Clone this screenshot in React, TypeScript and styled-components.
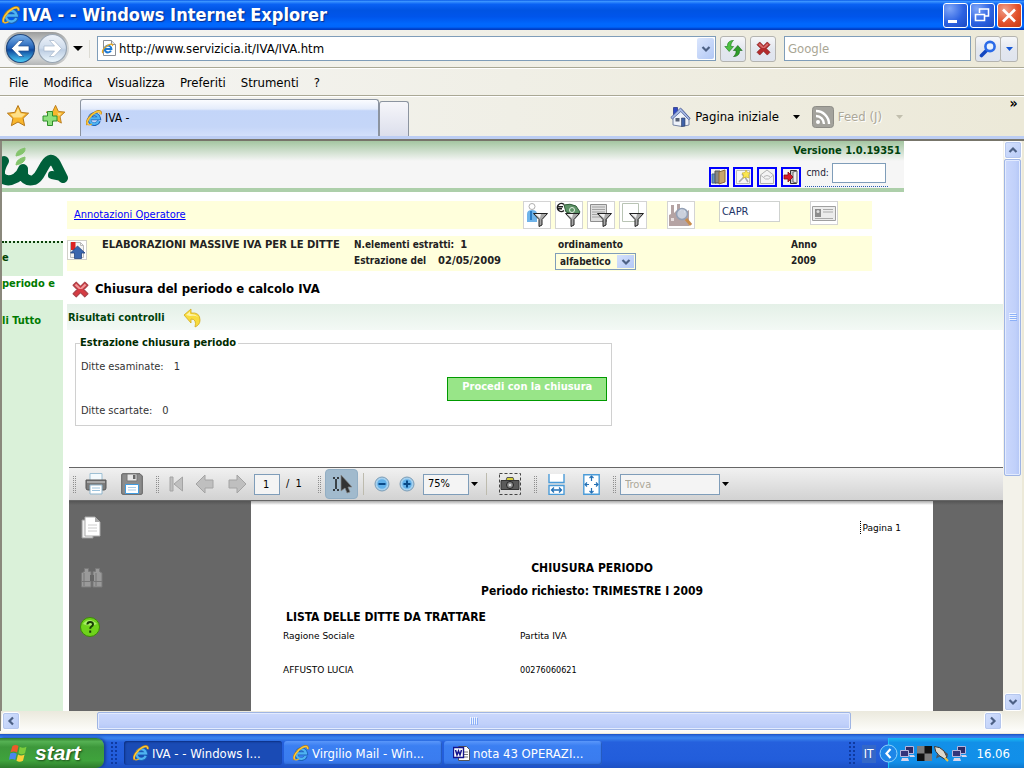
import React from "react";
import styled, { createGlobalStyle, css } from "styled-components";

const ui = `"DejaVu Sans Condensed", Tahoma, "DejaVu Sans", sans-serif`;
const wide = `"DejaVu Sans", Verdana, sans-serif`;
const tahoma = `"DejaVu Sans Condensed", Tahoma, sans-serif`;

const Global = createGlobalStyle`
  * { box-sizing: border-box; }
  body { margin: 0; background: #ece9d8; font-family: ${ui}; font-size: 12px; color: #000; overflow: hidden; }
  button, input, select { font: inherit; color: inherit; margin: 0; border-radius: 0; }
  button { padding: 0; background: none; border: 0; }
  svg { display: block; flex: none; }
`;

const Desktop = styled.div`
  min-height: 100vh;
  display: flex;
  flex-direction: column;
`;

/* ---------- title bar ---------- */
const TitleBar = styled.header`
  height: 30px;
  flex: none;
  display: flex;
  align-items: center;
  gap: 2px;
  padding: 0 2px;
  background: linear-gradient(#0a5be8 0, #3a93ff 5%, #0a62f4 14%, #0054e3 34%, #0055eb 56%, #0068fe 80%, #0066fc 90%, #003dc4 97%);
`;
const WindowTitle = styled.h1`
  flex: 1;
  margin: 0;
  font: bold 18px/30px ${tahoma};
  color: #fff;
  text-shadow: 1px 1px 1px #0a2f8c;
  white-space: nowrap;
`;
const CaptionButton = styled.button<{ $close?: boolean }>`
  width: 25px;
  height: 25px;
  border: 1px solid #fff;
  border-radius: 3px;
  background: ${(p) =>
    p.$close
      ? "radial-gradient(circle at 30% 25%, #f0a08a, #e2512b 55%, #c43a12)"
      : "radial-gradient(circle at 25% 20%, #7fa6f8, #2c62e2 55%, #1c49c2)"};
`;

/* ---------- address bar ---------- */
const bar = css`
  display: flex;
  align-items: center;
  flex: none;
  background: linear-gradient(90deg, #f5f5f4, #f0efe6 50%, #ece9d8);
`;
const AddressBar = styled.div`
  ${bar}
  height: 38px;
  padding: 0 6px 0 4px;
  border-bottom: 1px solid #aaa895;
  gap: 4px;
`;
const NavButton = styled.button`
  display: flex;
`;
const NavPair = styled.div`
  display: flex;
  width: 65px;
  height: 33px;
  align-items: center;
  justify-content: space-between;
  border-radius: 17px;
  padding: 0 1px;
  background: linear-gradient(#9a9c9c, #d6d8d8 40%, #d0d2d2 80%, #b4b6b6);
`;
const Divider = styled.i`
  width: 1px;
  height: 18px;
  background: #dddcd4;
  margin: 0 3px 0 2px;
`;
const UrlBox = styled.label`
  flex: 1;
  height: 25px;
  display: flex;
  align-items: center;
  gap: 2px;
  padding: 0 1px 0 3px;
  background: #fff;
  border: 1px solid #7f9db9;
`;
const BareInput = styled.input`
  flex: 1;
  min-width: 0;
  border: 0;
  padding: 0;
  outline: 0;
  background: transparent;
  font-size: 13px;
  &::placeholder { color: #a9a694; opacity: 1; }
`;
const DropButton = styled.button`
  width: 17px;
  height: 21px;
  display: flex;
  align-items: center;
  justify-content: center;
  border-radius: 2px;
  background: linear-gradient(135deg, #dbe6fd, #b2c8f5);
`;
const SmallButton = styled.button<{ $w?: number }>`
  width: ${(p) => p.$w ?? 26}px;
  height: 26px;
  display: flex;
  align-items: center;
  justify-content: center;
  border: 1px solid #b4b4b0;
  border-radius: 3px;
  background: linear-gradient(#f6f7f9, #e3e7ef 50%, #dfe4ee);
`;
const SearchBox = styled(UrlBox)`
  flex: 0 1 187px;
  margin: 0 0 0 4px;
`;
const SearchButtons = styled.div`
  display: flex;
  ${SmallButton} + ${SmallButton} { margin-left: -1px; }
`;

/* ---------- menu and tabs ---------- */
const MenuBar = styled.nav`
  ${bar}
  height: 28px;
  gap: 15px;
  padding: 0 9px;
  border-top: 1px solid #fff;
  border-bottom: 1px solid #aaa895;
  font-size: 13px;
`;
const TabBar = styled.div`
  ${bar}
  height: 40px;
  align-items: stretch;
  padding: 2px 4px 0 6px;
  border-top: 1px solid #fff;
`;
const Favorites = styled.div`
  display: flex;
  align-items: center;
  gap: 12px;
  width: 74px;
  padding-bottom: 3px;
`;
const Tab = styled.button`
  width: 299px;
  display: flex;
  align-items: center;
  gap: 3px;
  padding: 0 5px;
  border: 1px solid #8c94a0;
  border-bottom: 0;
  border-radius: 3px 3px 0 0;
  background: linear-gradient(#fbfcff, #e4ecfb 25%, #c3d5f8 30%, #c5d6f8 75%, #d3e0fb);
  font-size: 12px;
`;
const NewTab = styled.button`
  width: 30px;
  margin-top: 2px;
  border: 1px solid #8c94a0;
  border-bottom: 0;
  border-radius: 3px 3px 0 0;
  background: linear-gradient(#f6f6fa, #dcdfec);
`;
const Commands = styled.div`
  flex: 1;
  display: flex;
  align-items: center;
  justify-content: flex-end;
  padding-bottom: 2px;
  font-size: 13px;
`;
const Command = styled.button<{ $off?: boolean }>`
  display: flex;
  align-items: center;
  gap: 4px;
  margin-right: 12px;
  color: ${(p) => (p.$off ? "#aca899" : "#000")};
  text-shadow: ${(p) => (p.$off ? "1px 1px 0 #fff" : "none")};
  svg:last-child { margin-left: 10px; }
`;
const More = styled.button`
  align-self: flex-start;
  width: 13px;
  margin-left: 92px;
  font: bold 14px/8px ${tahoma};
`;
const TabFoot = styled.div`
  height: 5px;
  flex: none;
  background: #bccdf3;
  border-bottom: 2px solid #77756a;
`;

/* ---------- viewport ---------- */
const Viewport = styled.div`
  flex: 1;
  display: flex;
  padding-right: 2px;
  border-left: 2px solid #8a887c;
  background: #ece9d8;
  min-height: 0;
`;
const Page = styled.main`
  flex: 1;
  min-width: 0;
  display: flex;
  flex-direction: column;
  background: #fff;
  font: 11px/16px ${tahoma};
`;
const SiteHeader = styled.div`
  width: 90.1%;
  height: 51px;
  flex: none;
  display: flex;
  justify-content: space-between;
  border-bottom: 4px solid #adcfaa;
  background: linear-gradient(#a4c6a1, #f6f6f6 20px);
`;
const HeaderSide = styled.div`
  display: flex;
  flex-direction: column;
  align-items: flex-end;
  padding: 2px 3px 0 0;
  gap: 3px;
`;
const Version = styled.strong`
  color: #00420c;
  font: bold 11px/16px ${tahoma};
`;
const HeaderTools = styled.div`
  display: flex;
  align-items: flex-end;
  gap: 4px;
  padding-right: 13px;
`;
const BlueButton = styled.button`
  width: 20px;
  height: 20px;
  display: flex;
  align-items: center;
  justify-content: center;
  border: 2px solid #00f;
  background: #f4f4f0;
`;
const CmdLabel = styled.label`
  display: flex;
  align-items: center;
  gap: 3px;
  height: 25px;
  padding: 0 2px 2px 1px;
  border-bottom: 1px dotted #2a5bb0;
  font-size: 10px;
  color: #223;
`;
const TextField = styled.input<{ $w: number; $h: number; $line?: string }>`
  width: ${(p) => p.$w}px;
  height: ${(p) => p.$h}px;
  padding: 0 2px;
  border: 1px solid ${(p) => p.$line ?? "#7f9db9"};
  background: #fff;
  outline: 0;
`;
const Columns = styled.div`
  flex: 1;
  display: flex;
  gap: 4px;
`;
const SideNav = styled.nav`
  width: 61px;
  flex: none;
  display: flex;
  flex-direction: column;
  padding-top: 49px;
  overflow: hidden;
  color: #007a00;
  font-weight: bold;
  white-space: nowrap;
`;
const SideItem = styled.a<{ $h?: number; $plain?: boolean; $pad: number; $dots?: boolean; $dark?: boolean }>`
  flex: ${(p) => (p.$h ? `0 0 ${p.$h}px` : "1")};
  padding-top: ${(p) => p.$pad}px;
  background: ${(p) => (p.$plain ? "#fff" : "#daf1d9")};
  border-top: ${(p) => (p.$dots ? "2px dotted #0a400a" : "0")};
  color: ${(p) => (p.$dark ? "#044404" : "inherit")};
  text-decoration: none;
`;
const Content = styled.div`
  flex: 1;
  min-width: 0;
  display: flex;
  flex-direction: column;
  padding-top: 9px;
`;
const YellowRow = styled.div`
  width: 86%;
  flex: none;
  background: #ffffdc;
`;
const ToolRow = styled(YellowRow)`
  height: 28px;
  display: flex;
  align-items: flex-start;
  padding: 0 34px 0 7px;
`;
const NoteLink = styled.a`
  flex: 1;
  line-height: 28px;
  color: #00f;
`;
const IconGroup = styled.div`
  display: flex;
  gap: 4px;
  margin-right: 20px;
`;
const BoxButton = styled.button<{ $h?: number }>`
  width: 28px;
  height: ${(p) => p.$h ?? 28}px;
  display: flex;
  align-items: center;
  justify-content: center;
  border: 1px solid #d4d4d4;
  background: #fff;
`;
const CodeWrap = styled.label`
  display: flex;
  margin: 0 30px 0 24px;
  color: #223366;
`;
const InfoRow = styled(YellowRow)`
  height: 35px;
  margin-top: 7px;
  padding-top: 1px;
  display: grid;
  grid-template-columns: 35px 252px 201px 1fr 81px;
  font: bold 10px/16px ${tahoma};
  color: #222;
`;
const Heading = styled.span`
  font-family: ${wide};
`;
const HomeButton = styled.button`
  width: 20px;
  height: 20px;
  margin-top: 3px;
  border: 1px solid #d0d0c8;
  background: #fff;
`;
const Pair = styled.span<{ $gap: number }>`
  display: flex;
  gap: ${(p) => p.$gap}px;
  span:last-child { font-family: ${wide}; }
`;
const SortLabel = styled.label`
  padding-left: 3px;
  display: block;
`;
const SelectWrap = styled.span<{ $w: number; $h: number }>`
  position: relative;
  display: block;
  width: ${(p) => p.$w}px;
  height: ${(p) => p.$h}px;
  svg, i { pointer-events: none; }
`;
const Select = styled.select<{ $bg?: string }>`
  appearance: none;
  width: 100%;
  height: 100%;
  padding: 0 4px;
  border: 1px solid #7f9db9;
  background: ${(p) => p.$bg ?? "#fff"};
`;
const SelectArrow = styled.i`
  position: absolute;
  right: 2px;
  top: 2px;
  bottom: 2px;
  width: 17px;
  display: flex;
  align-items: center;
  justify-content: center;
  background: linear-gradient(135deg, #d5e1fc, #b4c9f6);
`;
const TitleRow = styled.h2`
  height: 33px;
  flex: none;
  display: flex;
  align-items: center;
  gap: 6px;
  margin: 0;
  padding: 3px 0 0 5px;
  font: bold 13px/16px ${tahoma};
`;
const ResultRow = styled.h3`
  height: 26px;
  flex: none;
  display: flex;
  align-items: center;
  gap: 18px;
  margin: 0;
  padding: 2px 1px 0;
  font: bold 11px/16px ${tahoma};
  color: #00420c;
  background: linear-gradient(#e4f0e7, #f3f9f5);
`;
const ResultBox = styled.fieldset`
  width: 57.4%;
  margin: 5px 8px 41px;
  height: 91px;
  flex: none;
  display: grid;
  grid-template-columns: 1fr 160px;
  padding: 0 4px 0 5px;
  border: 1px solid #d0d0d0;
  color: #333;
`;
const Legend = styled.legend`
  padding: 0 2px 0 0;
  margin-left: -1px;
  font: bold 11px/16px ${tahoma};
  color: #002b00;
`;
const Counts = styled.dl`
  margin: 0;
  display: flex;
  flex-direction: column;
  gap: 28px;
  padding-top: 8px;
`;
const Count = styled.div`
  display: flex;
  gap: 10px;
  dt, dd { margin: 0; }
`;
const Proceed = styled.button`
  height: 24px;
  margin-top: 26px;
  padding-bottom: 4px;
  border: 1px solid #009a00;
  background: #98e588;
  color: #fff;
  font: bold 11px/16px ${tahoma};
`;

/* ---------- document viewer ---------- */
const Viewer = styled.section`
  flex: 1;
  margin-left: 2px;
  display: flex;
  flex-direction: column;
`;
const ViewerBar = styled.div`
  height: 34px;
  flex: none;
  display: flex;
  align-items: center;
  border-top: 1px solid #666;
  border-bottom: 1px solid #666;
  background: linear-gradient(#f1f1f1, #d2d2d2);
`;
const Tool = styled.button<{ $w: number }>`
  width: ${(p) => p.$w}px;
  height: 30px;
  display: flex;
  flex: none;
  align-items: center;
  justify-content: center;
`;
const ActiveTool = styled(Tool)`
  border-radius: 4px;
  background: #a1bacd;
  border: 1px solid #92aec4;
`;
const Grip = styled.i<{ $m: number }>`
  width: 4px;
  height: 17px;
  margin: 0 ${(p) => p.$m}px;
  flex: none;
  background: conic-gradient(#8e8e8e 25%, transparent 0) 0 0 / 2px 2px;
`;
const Rule = styled.i<{ $m: number }>`
  width: 1px;
  height: 22px;
  margin: 0 ${(p) => p.$m}px;
  flex: none;
  background: #bdbbae;
`;
const PageCount = styled.label`
  display: flex;
  align-items: center;
  gap: 6px;
  margin-left: 1px;
  width: 59px;
  input { padding-left: 8px; background: #f4f4f4; }
`;
const Zoom = styled.span`
  margin: 0 8px 0 4px;
  display: flex;
  align-items: center;
  gap: 2px;
`;
const Find = styled.label`
  display: flex;
  align-items: center;
  gap: 2px;
  input { background: #f4f4f4; padding-left: 4px; }
  input::placeholder { color: #aca899; opacity: 1; }
`;
const ViewerBody = styled.div`
  flex: 1;
  display: flex;
  padding-right: 70px;
  background: linear-gradient(#555, #676767 4px);
`;
const Panel = styled.div`
  width: 182px;
  flex: none;
  display: flex;
  flex-direction: column;
  align-items: flex-start;
  gap: 27px;
  padding: 15px 11px;
`;
const Sheet = styled.article`
  flex: 1;
  padding: 20px 32px 0;
  background: linear-gradient(#aaa, #fff 4px);
  font: 9px/14px ${wide};
`;
const PageNo = styled.p`
  margin: 0;
  display: flex;
  justify-content: flex-end;
`;
const Caret = styled.i`
  width: 2px;
  height: 13px;
  border: 1px dotted #000;
  border-width: 0 0 0 1px;
`;
const SheetTitle = styled.h4<{ $top: number }>`
  margin: ${(p) => p.$top}px 0 0;
  text-align: center;
  font: bold 12px/16px ${tahoma};
`;
const SheetList = styled.table`
  width: 100%;
  margin-top: 10px;
  border-collapse: collapse;
  caption { text-align: left; padding-left: 3px; font: bold 12px/16px ${tahoma}; }
  th { font-weight: normal; }
  th, td { text-align: left; width: 237px; padding: 4px 0 20px; line-height: 14px; }
  td { padding-top: 0; }
  th:last-child, td:last-child { width: auto; }
  td:last-child { font-family: ${tahoma}; }
`;

/* ---------- scroll bars ---------- */
const VScroll = styled.div`
  width: 19px;
  flex: none;
  display: flex;
  flex-direction: column;
  background: #f3f2ea;
  padding: 0 1px;
`;
const HScroll = styled.div`
  height: 20px;
  flex: none;
  display: flex;
  align-items: center;
  padding: 0 22px 0 1px;
  border-left: 1px solid #8a887c;
  background: linear-gradient(#ebe9dd, #fdfdfa);
`;
const ScrollButton = styled.button`
  width: 18px;
  height: 18px;
  flex: none;
  display: flex;
  align-items: center;
  justify-content: center;
  border: 1px solid #fff;
  border-radius: 3px;
  outline: 1px solid #b5c7ee;
  outline-offset: -2px;
  background: linear-gradient(135deg, #d5e1fd, #b8cbf7);
`;
const Thumb = styled.div<{ $grow: number; $dir?: "v" }>`
  flex: ${(p) => p.$grow} 1 0;
  display: flex;
  align-items: center;
  justify-content: center;
  min-height: 18px;
  border: 1px solid #9fb5e4;
  border-radius: 2px;
  box-shadow: inset 0 0 0 1px #e3ebfe;
  background: linear-gradient(${(p) => (p.$dir ? "90deg" : "180deg")}, #cbd8fc, #c0d0fa 70%, #b3c6f5);
`;
const Space = styled.span<{ $grow: number }>`
  flex: ${(p) => p.$grow} 1 0;
`;
const WindowFoot = styled.div`
  height: 3px;
  flex: none;
  background: #fbfaf4;
  border-bottom: 1px solid #ece9d8;
`;

/* ---------- task bar ---------- */
const TaskBar = styled.footer`
  height: 34px;
  flex: none;
  display: flex;
  align-items: stretch;
  background: linear-gradient(#1a4fc0 0, #2f74e6 6%, #3a85ee 12%, #2560dd 24%, #225ddb 75%, #1d50c4 100%);
`;
const StartButton = styled.button`
  width: 104px;
  margin-top: 4px;
  display: flex;
  align-items: center;
  gap: 6px;
  padding-left: 9px;
  border-radius: 0 8px 8px 0;
  background: linear-gradient(#2f7d2d, #55b153 12%, #3d983b 30%, #3fa33c 75%, #2d7a2b);
  box-shadow: 2px 0 3px #173f96;
  color: #fff;
  font: italic bold 21px/24px "Liberation Sans", Arial, sans-serif;
  text-shadow: 1px 1px 2px #1c4a1a;
`;
const BarGrip = styled.i`
  width: 6px;
  margin: 8px 7px 4px;
  background: radial-gradient(circle at 1px 1px, #0f3aa0 0 1px, transparent 1px) 0 0 / 4px 4px;
`;
const Tasks = styled.div`
  flex: 1;
  display: flex;
  gap: 2px;
  padding: 7px 0 3px;
`;
const Task = styled.button<{ $on?: boolean }>`
  flex: 0 1 158px;
  display: flex;
  align-items: center;
  gap: 3px;
  padding-left: 9px;
  border-radius: 3px;
  color: #fff;
  white-space: nowrap;
  font-size: 13px;
  background: ${(p) => (p.$on ? "#1a4bb5" : "linear-gradient(#5a97fa, #3b7ff2 20%, #3a7cef 80%, #2f6bdc)")};
  box-shadow: ${(p) => (p.$on ? "inset 1px 1px 2px #0c2f80" : "inset -1px -1px 1px #2458bb")};
`;
const Lang = styled.button`
  align-self: center;
  margin: 6px 12px 0 0;
  padding: 0 2px;
  line-height: 18px;
  font-size: 12px;
  color: #fff;
  background: #3467c8;
`;
const Tray = styled.div`
  margin-top: 4px;
  display: flex;
  align-items: center;
  gap: 1px;
  padding-right: 14px;
  color: #fff;
  font-size: 13px;
  border-left: 1px solid #1ac2f5;
  background: linear-gradient(#19b9f2, #1290e8 15%, #118fe9 80%, #0f77cc);
  time { margin-left: 8px; }
  > svg:first-child { margin-left: -10px; }
`;

/* ---------- drawings ---------- */
const IeLogo = ({ size = 16 }: { size?: number }) => (
  <svg width={size} height={size} viewBox="0 0 16 16" aria-hidden="true">
    <path d="M13 10.800A5 5 0 1 1 13.200 8.400H4.500" fill="none" stroke="#1c62b8" strokeWidth="3.600" />
    <path d="M12.700 10.800A4.800 4.800 0 1 1 13 8.400H4.500" fill="none" stroke="#4fb4f2" strokeWidth="2.200" />
    <path d="M1.600 14.600C-.6 12.400 3.600 5 9.400 2.200C12.600.6 15.600.6 14.600 4.200" fill="none" stroke="#b97a10" strokeWidth="2.200" />
    <path d="M1.600 14.400C-.2 12 3.800 5.200 9.400 2.400C12.400.9 15.200 1 14.500 4" fill="none" stroke="#fbc93a" strokeWidth="1.500" />
    <path d="M1.600 14.500q1.600 1 4.200-.6" fill="none" stroke="#f0b428" strokeWidth="1.200" />
  </svg>
);
const PageIe = () => (
  <svg width="16" height="17" viewBox="0 0 16 17" aria-hidden="true">
    <path d="M2.500 .5h8l4 4v11h-12z" fill="#fff" stroke="#8b8f96" />
    <path d="M10.500 .5v4h4" fill="#e4e7ee" stroke="#8b8f96" />
    <path d="M10 10.600A3.400 3.400 0 1 1 10.400 9H4" fill="none" stroke="#1d79d2" strokeWidth="2" />
    <path d="M2 13C0 11 4 6 9 4.400c2-.6 3 0 2.400 1.600" fill="none" stroke="#e9a820" strokeWidth="1.200" />
  </svg>
);
const Down = ({ color = "#000", w = 7 }: { color?: string; w?: number }) => (
  <svg width={w} height={w > 8 ? 5 : 4} viewBox="0 0 7 4" preserveAspectRatio="none" aria-hidden="true">
    <path d="M0 0h7L3.500 4z" fill={color} />
  </svg>
);
const Chevron = ({ turn = 0 }: { turn?: number }) => (
  <svg width="10" height="10" viewBox="0 0 10 10" aria-hidden="true">
    <path d="M1.500 3 5 6.500 8.500 3" fill="none" stroke="#4d6185" strokeWidth="2.200" transform={`rotate(${turn} 5 5)`} />
  </svg>
);
const NavArrow = ({ back }: { back?: boolean }) => (
  <svg width="31" height="31" viewBox="0 0 31 31" aria-hidden="true">
    <defs>
      <linearGradient id={back ? "nb" : "nf"} x2="0" y2="1">
        <stop offset="0" stopColor={back ? "#7fb4ea" : "#eef3fa"} />
        <stop offset=".48" stopColor={back ? "#2262b8" : "#cfdcec"} />
        <stop offset=".55" stopColor={back ? "#0e479c" : "#bccde2"} />
        <stop offset="1" stopColor={back ? "#4ed2fb" : "#eef8fe"} />
      </linearGradient>
    </defs>
    <circle cx="15.500" cy="15.500" r="14" fill={`url(#${back ? "nb" : "nf"})`} stroke={back ? "#23497e" : "#98a5b3"} strokeWidth="1.200" />
    <g transform={back ? undefined : "rotate(180 15.500 15.500)"}>
      <path d="M6.500 15.500 14 7.500h4.500l-5 5.500H24v5H13.500l5 5.500H14z" fill="#fff" stroke={back ? "#1c4a8e" : "#a4b5ca"} strokeWidth=".7" />
    </g>
  </svg>
);
const starPath = "M12 1.500l3.200 6.900 7.400.8-5.500 5.100 1.500 7.400L12 18l-6.600 3.700 1.500-7.400L1.400 9.200l7.400-.8z";
const Star = () => (
  <svg width="24" height="24" viewBox="0 0 24 24" aria-hidden="true">
    <path d={starPath} fill="#f9b62c" stroke="#b5781a" strokeLinejoin="round" />
    <path d="M12 4l2.300 5.300 5 .6-3.800 3.600-8-.1-3-3.400 5.200-.8z" fill="#fde08a" />
  </svg>
);
const StarPlus = () => (
  <svg width="24" height="24" viewBox="0 0 24 24" aria-hidden="true">
    <path d={starPath} transform="translate(3 0) scale(.88)" fill="#f9b62c" stroke="#b5781a" strokeLinejoin="round" />
    <path d="M14 5l1.800 4 4 .6-3 2.400z" fill="#fde08a" />
    <path d="M5.500 7.500h5v4.500h4.500v5h-4.500v4.500h-5V17H1v-5h4.500z" fill="#8ee07c" stroke="#2f8f2c" />
  </svg>
);
const House = () => (
  <svg width="21" height="21" viewBox="0 0 21 21" aria-hidden="true">
    <path d="M3 10 11.500 3 19 11v8l-7 1.500-9-1.500z" fill="#eef2fa" stroke="#7583a3" />
    <path d="M3.500 1.500h4V6l-4 3.500z" fill="#3048c4" stroke="#1d2d7c" strokeWidth=".7" />
    <path d="M.8 11.500 10.500 2 20.200 12.500l-1.600 1.200L10.800 5.500 2.400 13z" fill="#a9bbe6" stroke="#4a5c96" strokeWidth=".8" />
    <path d="M11.500 12h3.500v8l-3.500.5z" fill="#3f62a8" stroke="#2d3b5e" strokeWidth=".6" />
    <path d="M5.500 12h4v3.500h-4z" fill="#555f74" />
  </svg>
);
const Rss = () => (
  <svg width="22" height="22" viewBox="0 0 22 22" aria-hidden="true">
    <rect x=".5" y=".5" width="21" height="21" rx="3" fill="#a3a29c" stroke="#8d8c86" />
    <circle cx="6" cy="16" r="2" fill="#fff" />
    <path d="M4 10a8 8 0 0 1 8 8M4 5a13 13 0 0 1 13 13" fill="none" stroke="#fff" strokeWidth="2.400" />
  </svg>
);
const Refresh = () => (
  <svg width="19" height="19" viewBox="0 0 19 19" aria-hidden="true">
    <path d="M9.500 1.500C5 1.500 3.200 4 3.500 7.500H.8l4.400 5 4.400-5H7c-.3-2.500.6-4.500 2.500-6z" fill="#4cc043" stroke="#1c7a1c" strokeWidth=".6" />
    <path d="M9.500 17.500c4.500 0 6.300-2.500 6-6h2.700l-4.400-5-4.400 5H12c.3 2.500-.6 4.500-2.500 6z" fill="#2e9e2a" stroke="#17651a" strokeWidth=".6" />
  </svg>
);
const Cross = ({ size = 16, glossy }: { size?: number; glossy?: boolean }) => (
  <svg width={size} height={size} viewBox="0 0 16 16" aria-hidden="true">
    <path d="M4 1 8 5l4-4 3 3-4 4 4 4-3 3-4-4-4 4-3-3 4-4-4-4z" fill={glossy ? "#d63b42" : "#b32a2c"} stroke={glossy ? "#a8434a" : "#7a1517"} strokeLinejoin="round" strokeWidth={glossy ? 1 : 0.6} />
    <path d="M4 2.500 8 6.500l4-4 1.500 1.500-4 3.500h-3L2.500 4z" fill={glossy ? "#f19a9c" : "#d5696a"} />
  </svg>
);
const Lens = () => (
  <svg width="18" height="18" viewBox="0 0 18 18" aria-hidden="true">
    <path d="M2.500 15.500l5-5" stroke="#1447c0" strokeWidth="3.600" strokeLinecap="round" />
    <circle cx="11" cy="6.500" r="4.600" fill="#e8f2fe" stroke="#2a6ae8" strokeWidth="2.600" />
  </svg>
);
const CaptionGlyph = ({ d, w = 2 }: { d: string; w?: number }) => (
  <svg width="22" height="23" viewBox="0 0 22 23" aria-hidden="true">
    <path d={d} fill="none" stroke="#fff" strokeWidth={w} />
  </svg>
);
const BrandMark = () => (
  <svg width="67" height="47" viewBox="0 0 67 47" aria-hidden="true">
    <g fill="none" stroke="#00603a" strokeWidth="10" strokeLinecap="round" strokeLinejoin="round">
      <path d="M2 20Q-4 30 -1 36Q5 42 14 37Q19 34 21 28M21 29L21 34Q24 41 32 39Q36 37 39 31L43 24Q49 14 54 23L61 37" />
      <path d="M50 34L60 36" strokeWidth="8" />
    </g>
    <path d="M14 15q0-6 9-8q1 6-9 8zM14 24q0-6 9-8q1 6-9 8z" fill="#84c46c" stroke="#84c46c" />
  </svg>
);
const FilterIcon = ({ children }: { children?: React.ReactNode }) => (
  <svg width="26" height="26" viewBox="0 0 26 26" aria-hidden="true">
    {children}
    <path d="M9.500 11.500h14l-5.500 6v5.500l-3 1.500v-7z" fill="#a8a8a8" stroke="#222" />
    <path d="M11 12h6l-1 4z" fill="#f2f2f2" />
  </svg>
);
const Printer = () => (
  <svg width="22" height="22" viewBox="0 0 22 22" aria-hidden="true">
    <path d="M5 .5h12V8H5z" fill="#f4fafd" stroke="#9fc0d4" />
    <path d="M1 7h20v8q0 2-2 2H3q-2 0-2-2z" fill="#7b7b7b" stroke="#555" />
    <path d="M2 8h18v2H2z" fill="#a9a9a9" />
    <path d="M5 12h12v9H5z" fill="#fff" stroke="#8fb5cc" />
    <path d="M7 15h8M7 17.500h8" stroke="#9cc4de" />
  </svg>
);
const Floppy = () => (
  <svg width="22" height="22" viewBox="0 0 22 22" aria-hidden="true">
    <path d="M.7 1.700q0-1 1-1H19l2.300 2.300v17.300q0 1-1 1H1.700q-1 0-1-1z" fill="#8b8b8b" stroke="#5f5f5f" />
    <path d="M6 1h10v7H6z" fill="#e6e6e6" stroke="#777" />
    <path d="M12 2h2.500v4H12z" fill="#666" />
    <path d="M4.500 11.500h13v9h-13z" fill="#fff" stroke="#3f9be0" />
    <path d="M7 14.500h8M7 17h8" stroke="#a9cdea" />
  </svg>
);
const GreyArrow = ({ flip }: { flip?: boolean }) => (
  <svg width="20" height="20" viewBox="0 0 20 20" aria-hidden="true">
    <path d="M1 10 10 1v5h8v8h-8v5z" fill="#bfbfbf" stroke="#a4a4a4" transform={flip ? "rotate(180 10 10)" : undefined} />
  </svg>
);
const Round = ({ plus }: { plus?: boolean }) => (
  <svg width="16" height="16" viewBox="0 0 16 16" aria-hidden="true">
    <circle cx="8" cy="8" r="7" fill="#a6d0ee" stroke="#7d9db6" />
    <circle cx="8" cy="8" r="4.800" fill="#62b1ea" />
    <path d={plus ? "M4.500 8h7M8 4.500v7" : "M4.500 8h7"} stroke="#0a4a88" strokeWidth="2" />
  </svg>
);
const Windows = () => (
  <svg width="20" height="20" viewBox="0 0 20 20" aria-hidden="true">
    <path d="M3.500 3q3-2 6 0L8 9.500q-3-2-6.500-.3z" fill="#ee5a2a" />
    <path d="M10.700 3.800q3 2 6.800 0L16 10.300q-3.500 1.800-6.500 0z" fill="#7ccc3c" />
    <path d="M1.200 10.500q3.400-1.700 6.500.3L6.200 17q-3-2-6.200-.2z" fill="#4a86ee" />
    <path d="M9 11.500q3 1.800 6.600 0L14 17.800q-3.500 1.800-6.500 0z" fill="#fbd038" />
  </svg>
);
const WordIcon = () => (
  <svg width="17" height="17" viewBox="0 0 17 17" aria-hidden="true">
    <path d="M5.500 1.500h8l3 3v11h-11z" fill="#fff" stroke="#555" />
    <path d="M9 7h6M9 9.500h6M9 12h6" stroke="#777" />
    <path d="M.5 2.500h10v10H.5z" fill="#fff" stroke="#14148c" strokeWidth="1.400" />
    <path d="M2.500 5 4 10l1.500-4L7 10l1.500-5" fill="none" stroke="#14148c" strokeWidth="1.500" />
  </svg>
);
const Network = () => (
  <svg width="17" height="17" viewBox="0 0 17 17" aria-hidden="true">
    <path d="M6.500 1.500h8v7h-8z" fill="#2c2c66" stroke="#b6b6de" />
    <path d="M1.500 5.500h8v6h-8z" fill="#34347a" stroke="#b6b6de" />
    <path d="M10 10h5l1 2h-5zM3 13h6l1 3H2z" fill="#d5d5ee" />
  </svg>
);
const Checker = () => (
  <svg width="15" height="15" viewBox="0 0 14 14" aria-hidden="true">
    <path d="M0 0h14v14H0z" fill="#111" />
    <path d="M0 0h7v7H0zM7 7h7v7H7z" fill="#7d7d7d" />
  </svg>
);
const Rocket = () => (
  <svg width="17" height="17" viewBox="0 0 17 17" aria-hidden="true">
    <path d="M1.500 1.500Q7 1.500 11 6l3 6-2.500 2L6 10.500Q1.500 6.500 1.500 1.500z" fill="#ddd9cc" stroke="#333" />
    <path d="M4 9.500l-1 4 4-2zM11 6l4 3-1 4z" fill="#555" />
    <path d="M12 13l3 3" stroke="#f2c33a" strokeWidth="2" />
  </svg>
);
const TrayArrow = () => (
  <svg width="19" height="19" viewBox="0 0 19 19" aria-hidden="true">
    <circle cx="9.500" cy="9.500" r="8.500" fill="#1d86e8" stroke="#8fd4fb" />
    <path d="M11.500 5 7.500 9.500l4 4.500" fill="none" stroke="#fff" strokeWidth="2.200" />
  </svg>
);

export default function App() {
  return (
    <Desktop>
      <Global />
      <TitleBar>
        <IeLogo size={18} />
        <WindowTitle>IVA - - Windows Internet Explorer</WindowTitle>
        <CaptionButton aria-label="Riduci a icona"><CaptionGlyph d="M4 17.500h9" w={3} /></CaptionButton>
        <CaptionButton aria-label="Ripristina"><CaptionGlyph d="M8.500 9V5h9v7H14M4.500 10.500h9v6h-9zM4.500 10.500h9" w={1.6} /></CaptionButton>
        <CaptionButton $close aria-label="Chiudi"><CaptionGlyph d="M5 5.500l12 12M17 5.500l-12 12" w={2.6} /></CaptionButton>
      </TitleBar>

      <AddressBar>
        <NavPair>
          <NavButton aria-label="Indietro"><NavArrow back /></NavButton>
          <NavButton aria-label="Avanti"><NavArrow /></NavButton>
        </NavPair>
        <NavButton aria-label="Pagine recenti"><Down w={10} /></NavButton>
        <Divider />
        <UrlBox>
          <PageIe />
          <BareInput aria-label="Indirizzo" defaultValue="http://www.servizicia.it/IVA/IVA.htm" />
          <DropButton aria-label="Mostra indirizzi"><Chevron /></DropButton>
        </UrlBox>
        <SmallButton aria-label="Aggiorna"><Refresh /></SmallButton>
        <SmallButton aria-label="Interrompi"><Cross size={15} /></SmallButton>
        <SearchBox>
          <BareInput aria-label="Cerca" placeholder="Google" />
        </SearchBox>
        <SearchButtons>
          <SmallButton aria-label="Avvia ricerca"><Lens /></SmallButton>
          <SmallButton $w={18} aria-label="Opzioni di ricerca"><Down color="#1557d6" /></SmallButton>
        </SearchButtons>
      </AddressBar>

      <MenuBar>
        {["File", "Modifica", "Visualizza", "Preferiti", "Strumenti", "?"].map((m) => (
          <button key={m}>{m}</button>
        ))}
      </MenuBar>

      <TabBar>
        <Favorites>
          <button aria-label="Preferiti"><Star /></button>
          <button aria-label="Aggiungi a Preferiti"><StarPlus /></button>
        </Favorites>
        <Tab><IeLogo />IVA -</Tab>
        <NewTab aria-label="Nuova scheda" />
        <Commands>
          <Command><House />Pagina iniziale<Down /></Command>
          <Command $off><Rss />Feed (J)<Down color="#c2bfae" /></Command>
          <More aria-label="Altri comandi">»</More>
        </Commands>
      </TabBar>
      <TabFoot />

      <Viewport>
        <Page>
          <SiteHeader>
            <BrandMark />
            <HeaderSide>
              <Version>Versione 1.0.19351</Version>
              <HeaderTools>
                <BlueButton aria-label="Archivio">
                  <svg width="16" height="16" viewBox="0 0 16 16"><path d="M1 5h4v9H1z" fill="#5d8fc4" stroke="#47688c" /><path d="M4 2h5v12H4z" fill="#8a8a84" stroke="#555" /><path d="M8 3l6-2v12l-6 2z" fill="#c9a56c" stroke="#8b6a38" /></svg>
                </BlueButton>
                <BlueButton aria-label="Impostazioni">
                  <svg width="16" height="16" viewBox="0 0 16 16"><path d="M1.500 1.500h13v13h-13z" fill="#f6f6f6" stroke="#bbb" /><path d="M4 13l5-5m-2-3 3 3 3 5" fill="none" stroke="#aaa" strokeWidth="1.600" /><path d="M11 1l1.500 2.500L15 4l-1.500 2 .5 3-3-1-3 1 .5-3L7 4l3-.5z" fill="#fbe650" stroke="#c9ae22" strokeWidth=".6" /></svg>
                </BlueButton>
                <BlueButton aria-label="Posta">
                  <svg width="16" height="16" viewBox="0 0 16 16"><path d="M1.500 6 8 1l6.500 5v8.500h-13z" fill="#f4f4f4" stroke="#b0b0b0" /><path d="M1.500 6l5 4h3l5-4M5 7.500q3-2 6 0" fill="none" stroke="#b8b8b8" /></svg>
                </BlueButton>
                <BlueButton aria-label="Esci">
                  <svg width="16" height="16" viewBox="0 0 16 16"><path d="M7.500 1.500h6v13h-6z" fill="#c8c8c8" stroke="#333" /><path d="M10 3l4-1v12l-4-1z" fill="#eee" stroke="#666" /><path d="M1 6h4V3l5 5-5 5v-3H1z" fill="#d31c2b" stroke="#7d0e17" strokeWidth=".8" /></svg>
                </BlueButton>
                <CmdLabel>cmd:<TextField $w={54} $h={20} /></CmdLabel>
              </HeaderTools>
            </HeaderSide>
          </SiteHeader>

          <Columns>
            <SideNav>
              <SideItem href="#" $dots $dark $h={35} $pad={7}>e</SideItem>
              <SideItem href="#" $plain $h={24} $pad={0}>periodo e</SideItem>
              <SideItem href="#" $pad={13}>li Tutto</SideItem>
            </SideNav>

            <Content>
              <ToolRow>
                <NoteLink href="#">Annotazioni Operatore</NoteLink>
                <IconGroup>
                  <BoxButton aria-label="Filtra anagrafica">
                    <FilterIcon><circle cx="8" cy="4.500" r="3" fill="#fff" stroke="#b0b0b0" /><path d="M3 12q0-4 5-4t5 4v8H3z" fill="#6fb4ea" /><path d="M7 9v9" stroke="#2a7cc4" strokeWidth="2" /></FilterIcon>
                  </BoxButton>
                  <BoxButton aria-label="Filtra importi">
                    <FilterIcon><path d="M8 3q6-2 12 1l4 6-3 4-11-4z" fill="#5f9468" stroke="#2f5c38" /><path d="M8 2.500a4 4 0 1 0 0 6M1.500 4.800H7M1.500 6.800H6" fill="none" stroke="#222" strokeWidth="1.500" /><circle cx="16" cy="8" r="2.500" fill="none" stroke="#e3efe3" /></FilterIcon>
                  </BoxButton>
                  <BoxButton aria-label="Filtra documento">
                    <FilterIcon><path d="M2.500 2.500h16v17h-16z" fill="#dedede" stroke="#8e8e8e" /><path d="M4 5h13M4 7.500h13M4 10h13M4 12.500h6M4 15h8" stroke="#a2a2a2" /></FilterIcon>
                  </BoxButton>
                  <BoxButton aria-label="Rimuovi filtro">
                    <FilterIcon><path d="M2.500 1.500h16v18h-16z" fill="#fff" stroke="#b9c4b4" /></FilterIcon>
                  </BoxButton>
                </IconGroup>
                <BoxButton aria-label="Cerca ditta">
                  <svg width="26" height="26" viewBox="0 0 26 26"><path d="M1 24V13l2-1V3h3v8l3-3V2h3v7l4-3v5l5-3v16z" fill="#b5a3a3" /><path d="M3 16h3v3H3z" fill="#e7dede" /><circle cx="14" cy="12" r="5.500" fill="#cfd8e6" fillOpacity=".85" stroke="#93a0b5" strokeWidth="1.600" /><path d="M18 17l5 6" stroke="#c98c4a" strokeWidth="3" /></svg>
                </BoxButton>
                <CodeWrap><TextField $w={61} $h={21} $line="#cfd2cf" aria-label="Codice" defaultValue="CAPR" /></CodeWrap>
                <BoxButton $h={24} aria-label="Scheda anagrafica">
                  <svg width="26" height="20" viewBox="0 0 26 20"><path d="M1.500 3.500h23v14h-23z" fill="#ececec" stroke="#a0a0a0" /><path d="M4 6h6v8H4z" fill="#8c8c8c" /><circle cx="7" cy="8.500" r="1.500" fill="#ddd" /><path d="M12 6.500h10M12 9h10M4 15.500h18" stroke="#aaa" /></svg>
                </BoxButton>
              </ToolRow>

              <InfoRow>
                <HomeButton aria-label="Torna all'inizio">
                  <svg width="18" height="18" viewBox="0 0 18 18"><path d="M2.500 1.500h10l3 3v12h-13z" fill="#f4f4f4" stroke="#bbb" /><path d="M12.500 1.500v3h3" fill="none" stroke="#bbb" /><path d="M3 1h4.500v8H3z" fill="#d22" /><path d="M2.500 12 9.500 5 17 12h-3.500v5.500h-7V12z" fill="#3a66ae" stroke="#24457d" strokeWidth=".8" /></svg>
                </HomeButton>
                <Heading>ELABORAZIONI MASSIVE IVA PER LE DITTE</Heading>
                <div>
                  <Pair $gap={6}><span>N.elementi estratti:</span><span>1</span></Pair>
                  <Pair $gap={12}><span>Estrazione del</span><span>02/05/2009</span></Pair>
                </div>
                <div>
                  <SortLabel htmlFor="sort">ordinamento</SortLabel>
                  <SelectWrap $w={81} $h={17}>
                    <Select id="sort" $bg="#ffffdc"><option>alfabetico</option></Select>
                    <SelectArrow><Chevron /></SelectArrow>
                  </SelectWrap>
                </div>
                <div>Anno<br />2009</div>
              </InfoRow>

              <TitleRow><Cross glossy size={17} />Chiusura del periodo e calcolo IVA</TitleRow>
              <ResultRow>
                Risultati controlli
                <button aria-label="Indietro">
                  <svg width="18" height="20" viewBox="0 0 18 20"><path d="M1 7 8 1v4q9-1 9 7 0 5-5 7 2-8-4-8v4z" fill="#f8dc3c" stroke="#d3a91c" strokeWidth=".8" /><path d="M3 7l4-3.500V6q6 0 8 3-3-2-8-1z" fill="#fdf3a8" /></svg>
                </button>
              </ResultRow>

              <ResultBox>
                <Legend>Estrazione chiusura periodo</Legend>
                <Counts>
                  <Count><dt>Ditte esaminate:</dt><dd>1</dd></Count>
                  <Count><dt>Ditte scartate:</dt><dd>0</dd></Count>
                </Counts>
                <Proceed>Procedi con la chiusura</Proceed>
              </ResultBox>

              <Viewer>
                <ViewerBar>
                  <Grip $m={3} />
                  <Tool $w={34} aria-label="Stampa"><Printer /></Tool>
                  <Tool $w={38} aria-label="Salva"><Floppy /></Tool>
                  <Grip $m={4} />
                  <Tool $w={26} aria-label="Prima pagina">
                    <svg width="15" height="16" viewBox="0 0 15 16"><path d="M1 1h3v14H1zM13.500 1v14L5 8z" fill="#bfbfbf" stroke="#a4a4a4" /></svg>
                  </Tool>
                  <Tool $w={32} aria-label="Pagina precedente"><GreyArrow /></Tool>
                  <Tool $w={32} aria-label="Pagina successiva"><GreyArrow flip /></Tool>
                  <PageCount><TextField $w={26} $h={21} defaultValue="1" aria-label="Pagina" />/&nbsp; 1</PageCount>
                  <Grip $m={4} />
                  <ActiveTool $w={33} aria-label="Selezione">
                    <svg width="22" height="20" viewBox="0 0 22 20"><path d="M2 4h2M6 4h2M5 5v10M2 16h2M6 16h2" stroke="#111" strokeWidth="1.400" /><path d="M10 1v16l4-3 2 5 3-1-2-5h4z" fill="#333" stroke="#888" strokeWidth=".7" /></svg>
                  </ActiveTool>
                  <Rule $m={5} />
                  <Tool $w={25} aria-label="Riduci"><Round /></Tool>
                  <Tool $w={25} aria-label="Ingrandisci"><Round plus /></Tool>
                  <Zoom>
                    <SelectWrap $w={46} $h={21}><Select $bg="#f4f4f4" aria-label="Zoom"><option>75%</option></Select></SelectWrap>
                    <Down />
                  </Zoom>
                  <Rule $m={0} />
                  <Tool $w={46} aria-label="Istantanea">
                    <svg width="24" height="24" viewBox="0 0 24 24"><path d="M1.500 1.500h21v21h-21z" fill="none" stroke="#444" strokeDasharray="3 2" /><path d="M9 5.500h6l1 3H8z" fill="#d6d03c" stroke="#555" /><path d="M3 8.500h18v9H3z" fill="#5a5a5a" stroke="#333" /><circle cx="12" cy="13" r="3.500" fill="#888" stroke="#222" /><circle cx="12" cy="13" r="1.300" fill="#ddd" /></svg>
                  </Tool>
                  <Grip $m={0} />
                  <Tool $w={38} aria-label="Adatta larghezza">
                    <svg width="17" height="21" viewBox="0 0 17 21"><path d="M1 0v8.500h15V0M1 20.500v-9h15v9z" fill="#fff" stroke="#4a9bd8" strokeWidth="1.400" /><path d="M3.500 16h10M6 13.500 3.500 16 6 18.500M11 13.500l2.500 2.500-2.500 2.500" fill="none" stroke="#2370b5" strokeWidth="1.300" /></svg>
                  </Tool>
                  <Tool $w={33} aria-label="Adatta pagina">
                    <svg width="17" height="21" viewBox="0 0 17 21"><path d="M.8 .8h15.400v19.400H.8z" fill="#fff" stroke="#4a9bd8" strokeWidth="1.400" /><path d="M8.500 2v5M8.500 14v5M2 10.500h4M11 10.500h4M6.500 4l2-2 2 2M6.500 17l2 2 2-2M4 8.500l-2 2 2 2M13 8.500l2 2-2 2" fill="none" stroke="#2370b5" strokeWidth="1.200" /></svg>
                  </Tool>
                  <Grip $m={4} />
                  <Find><TextField $w={100} $h={21} placeholder="Trova" aria-label="Trova" /><Down /></Find>
                </ViewerBar>
                <ViewerBody>
                  <Panel>
                    <button aria-label="Pagine">
                      <svg width="22" height="24" viewBox="0 0 22 24"><path d="M2 4h11v18H2z" fill="#eee" stroke="#999" /><path d="M5 1h10l5 5v14H5z" fill="#fff" stroke="#aaa" /><path d="M15 1v5h5z" fill="#aaa" /><path d="M8 9h9M8 12h9M8 15h9" stroke="#ccc" /></svg>
                    </button>
                    <button aria-label="Cerca nel documento">
                      <svg width="24" height="22" viewBox="0 0 24 22"><path d="M4.500 1.500h4v3h2.500v15.500H1.500V6l3-1.500zM15.500 1.500h4v3l2.500 1.500v14h-9V4.500h2.500z" fill="#9a9a9a" stroke="#7a7a7a" /><path d="M10 8h4v6h-4z" fill="#666" /><path d="M2 14.500h8.500M13.500 14.500H22M4 6v13M16 6v13" stroke="#777" /></svg>
                    </button>
                    <button aria-label="Guida">
                      <svg width="22" height="22" viewBox="0 0 22 22"><circle cx="10" cy="11" r="9.500" fill="#6fd31b" stroke="#3c8a08" /><path d="M3 8q6-8 14 0-7 3-14 0z" fill="#a9ee66" /><path d="M7.300 8.500q.3-2.500 2.900-2.500t2.800 2.200q0 1.400-1.500 2.300-1.300.8-1.300 2.300M10.200 14.500v2.200" fill="none" stroke="#173d05" strokeWidth="2" /></svg>
                    </button>
                  </Panel>
                  <Sheet>
                    <PageNo><Caret />Pagina 1</PageNo>
                    <SheetTitle $top={25}>CHIUSURA PERIODO</SheetTitle>
                    <SheetTitle $top={7}>Periodo richiesto: TRIMESTRE I 2009</SheetTitle>
                    <SheetList>
                      <caption>LISTA DELLE DITTE DA TRATTARE</caption>
                      <thead><tr><th>Ragione Sociale</th><th>Partita IVA</th></tr></thead>
                      <tbody><tr><td>AFFUSTO LUCIA</td><td>00276060621</td></tr></tbody>
                    </SheetList>
                  </Sheet>
                </ViewerBody>
              </Viewer>
            </Content>
          </Columns>
        </Page>
        <VScroll>
          <ScrollButton aria-label="Su"><Chevron turn={180} /></ScrollButton>
          <Thumb $grow={316} $dir="v">
            <svg width="8" height="8" viewBox="0 0 8 8"><path d="M0 .5h7M0 2.500h7M0 4.500h7M0 6.500h7" stroke="#eef4fe" /><path d="M1 1.500h7M1 3.500h7M1 5.500h7M1 7.500h7" stroke="#8cb0f8" /></svg>
          </Thumb>
          <Space $grow={218} />
          <ScrollButton aria-label="Giù"><Chevron /></ScrollButton>
        </VScroll>
      </Viewport>
      <HScroll>
        <ScrollButton aria-label="Sinistra"><Chevron turn={90} /></ScrollButton>
        <Space $grow={77} />
        <Thumb $grow={754}>
          <svg width="8" height="8" viewBox="0 0 8 8"><path d="M.5 0v7M2.500 0v7M4.500 0v7M6.500 0v7" stroke="#eef4fe" /><path d="M1.500 1v7M3.500 1v7M5.500 1v7M7.500 1v7" stroke="#8cb0f8" /></svg>
        </Thumb>
        <Space $grow={133} />
        <ScrollButton aria-label="Destra"><Chevron turn={-90} /></ScrollButton>
      </HScroll>
      <WindowFoot />

      <TaskBar>
        <StartButton><Windows />start</StartButton>
        <BarGrip />
        <Tasks>
          <Task $on><IeLogo />IVA - - Windows I...</Task>
          <Task><IeLogo />Virgilio Mail - Win...</Task>
          <Task><WordIcon />nota 43 OPERAZI...</Task>
        </Tasks>
        <BarGrip />
        <Lang>IT</Lang>
        <Tray>
          <TrayArrow />
          <Network />
          <Checker />
          <Rocket />
          <Network />
          <time>16.06</time>
        </Tray>
      </TaskBar>
    </Desktop>
  );
}
